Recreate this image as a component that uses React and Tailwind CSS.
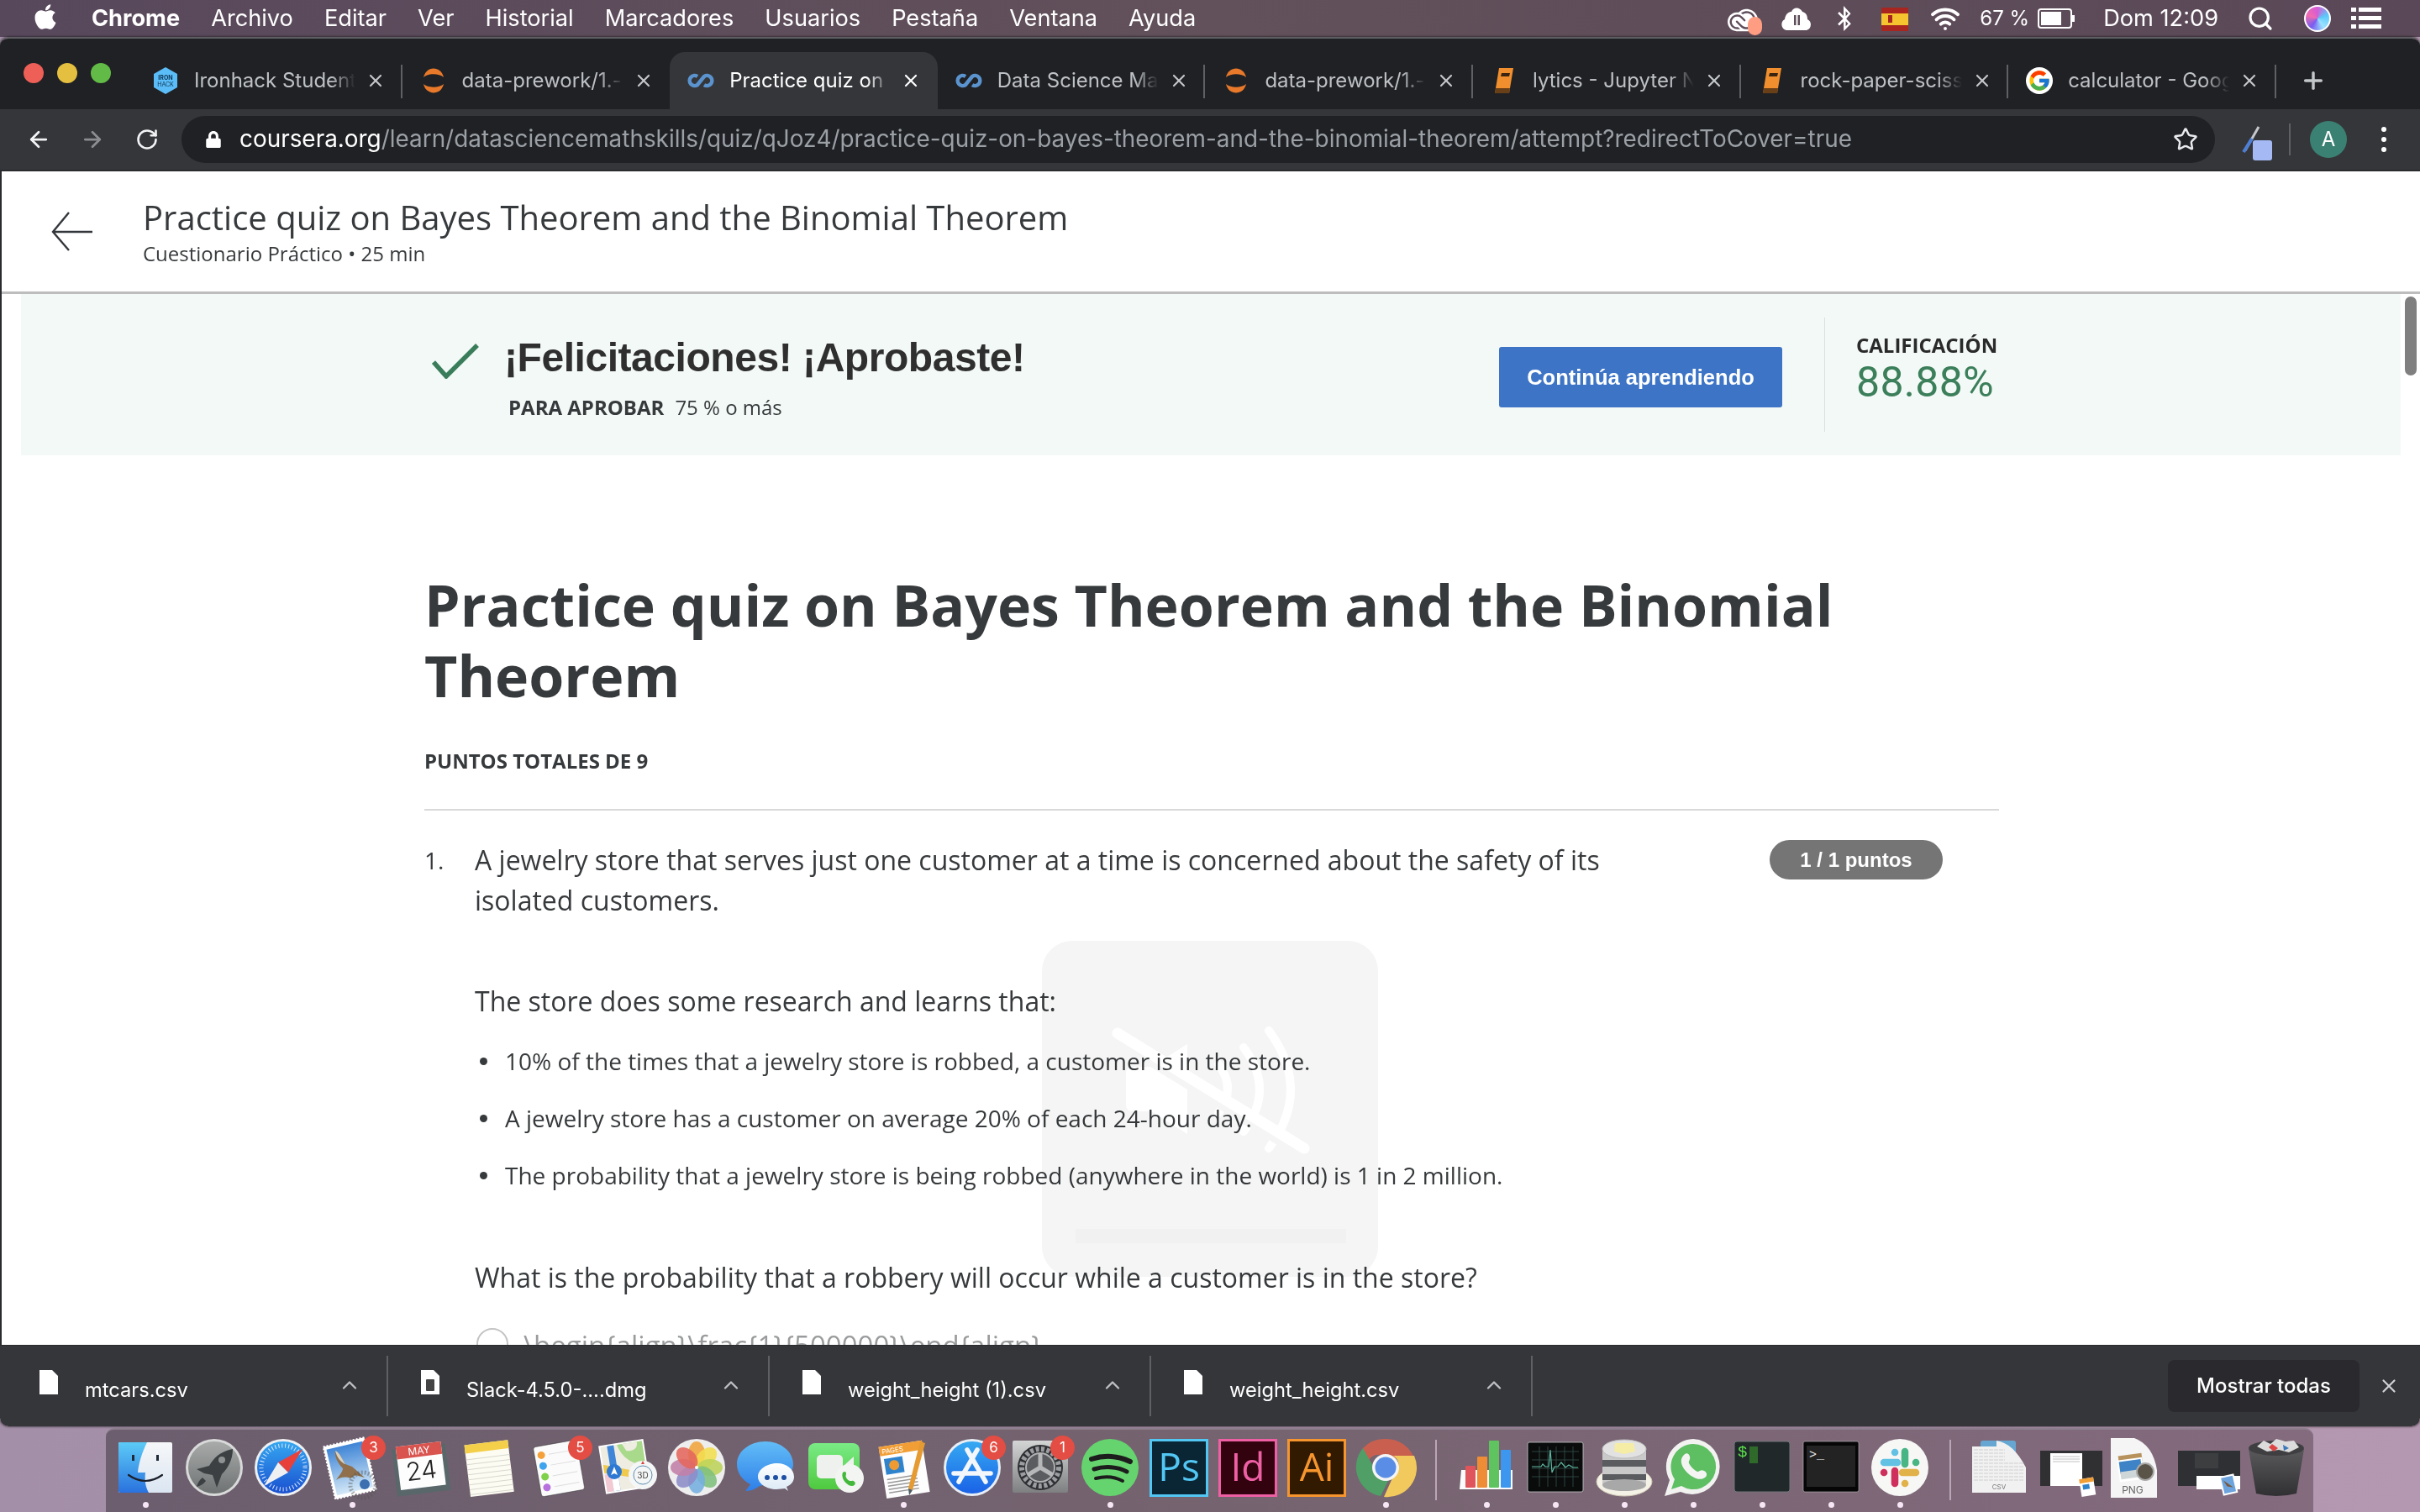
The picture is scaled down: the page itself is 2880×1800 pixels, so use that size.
import { ArrowLeft, ArrowRight, ChevronUp, Plus, RotateCw, Search, Star, Wifi, X } from "lucide-react";
import { FaApple, FaBluetoothB, FaLock } from "react-icons/fa";
import { FcGoogle } from "react-icons/fc";
import { SiAdobecreativecloud } from "react-icons/si";

const Svg = ({ children }) => (
  <svg viewBox="0 0 70 70" width="70" height="70" className="overflow-visible">
    {children}
  </svg>
);

const Grad = ({ id, from, to, x2 = 0, y2 = 1 }) => (
  <linearGradient id={id} x1="0" y1="0" x2={x2} y2={y2}>
    <stop offset="0" stopColor={from} />
    <stop offset="1" stopColor={to} />
  </linearGradient>
);

const Finder = () => (
  <Svg>
    <defs>
      <Grad id="fb" from="#5ccbf7" to="#2a72de" />
      <Grad id="fw" from="#f6f7f9" to="#dbe6f2" />
    </defs>
    <rect x="3" y="5" width="64" height="60" rx="2" fill="url(#fw)" />
    <path d="M5 5H37C31 17 27 30 26 41H35C34 50 35 58 39 65H5Q3 65 3 63V7Q3 5 5 5Z" fill="url(#fb)" />
    <rect x="19" y="20" width="3" height="7" fill="#1d2a3a" />
    <rect x="48" y="20" width="3" height="7" fill="#1d2a3a" />
    <path d="M15 44Q35 58 55 44" fill="none" stroke="#1b1f2a" strokeWidth="2.2" strokeLinecap="round" />
  </Svg>
);

const Launchpad = () => (
  <Svg>
    <defs>
      <Grad id="lp" from="#a9abab" to="#6f7272" />
    </defs>
    <circle cx="35" cy="35" r="34" fill="#d8d9d9" />
    <circle cx="35" cy="35" r="31" fill="url(#lp)" />
    <path d="M57 13C45 15 35 22 29 33L14 37 23 42 33 44 38 59 44 43C52 35 57 25 57 13Z" fill="#3c4042" />
    <path d="M21 47C17 50 15 54 14 58 18 57 22 55 25 51Z" fill="#3c4042" />
    <circle cx="44" cy="26" r="4" fill="#8f9292" />
  </Svg>
);

const Safari = () => (
  <Svg>
    <defs>
      <Grad id="sf" from="#35a7f0" to="#1a50d0" />
    </defs>
    <circle cx="35" cy="35" r="34" fill="#eef0f2" />
    <circle cx="35" cy="35" r="31" fill="url(#sf)" />
    <circle cx="35" cy="35" r="26" fill="none" stroke="#dbe9fb" strokeWidth="5" strokeDasharray="1 3" />
    <polygon points="58,13 41,41 29,29" fill="#e8413c" />
    <polygon points="12,57 41,41 29,29" fill="#eef0f2" />
  </Svg>
);

const Mail = () => (
  <Svg>
    <defs>
      <Grad id="ml" from="#3f85d6" to="#d4e8f7" />
    </defs>
    <g transform="rotate(-13 32 35)">
      <rect x="7" y="4" width="50" height="64" fill="#fff" stroke="#fff" strokeWidth="2" strokeDasharray="2 2" />
      <rect x="10" y="8" width="44" height="56" fill="url(#ml)" />
    </g>
    <path d="M15 15C20 17 23 25 27 31L35 34 50 47 39 44 33 48C27 45 20 47 16 50 20 44 24 40 24 36 18 30 14 22 15 15Z" fill="#8f6f4c" />
    <path d="M15 15C20 17 23 25 27 31 23 30 17 24 15 15Z" fill="#d8d2c4" />
    <circle cx="48" cy="56" r="15" fill="none" stroke="#555" strokeOpacity=".45" strokeWidth="5" strokeDasharray="2 2" />
    <circle cx="50" cy="55" r="6" fill="#3b6fb0" />
  </Svg>
);

const Calendar = () => (
  <Svg>
    <g transform="rotate(-7 35 35)">
      <rect x="3" y="10" width="64" height="56" fill="#59676b" />
      <rect x="8" y="7" width="54" height="52" fill="#fdfdfd" />
      <rect x="8" y="7" width="54" height="15" fill="#d9544f" />
      <text x="35" y="19" fontSize="12" textAnchor="middle" fill="#fff" fontFamily="Inter, sans-serif">MAY</text>
      <text x="35" y="49" fontSize="30" textAnchor="middle" fill="#222" fontFamily="Inter, sans-serif" fontWeight="300">24</text>
    </g>
  </Svg>
);

const Notes = () => (
  <Svg>
    <g transform="rotate(-7 35 35)">
      <rect x="8" y="5" width="52" height="62" fill="#fdfcf3" />
      <rect x="8" y="5" width="52" height="10" fill="#f4cf4a" />
      {[22, 28, 34, 40, 46, 52, 58, 64].map((y) => (
        <rect key={y} x="8" y={y} width="52" height="1" fill="#d8d8d0" />
      ))}
    </g>
  </Svg>
);

const Reminders = () => (
  <Svg>
    <g transform="rotate(-10 35 35)">
      <rect x="9" y="6" width="52" height="60" rx="3" fill="#fbfbfb" stroke="#333" strokeWidth=".5" />
      {[["#f5a13b", 17], ["#3fa4ee", 30], ["#7fd04a", 43], ["#b671dd", 56]].map(([c, y]) => (
        <g key={c}>
          <circle cx="17" cy={y} r="4.5" fill={c} />
          <rect x="26" y={y} width="30" height="1" fill="#ddd" />
        </g>
      ))}
    </g>
  </Svg>
);

const Maps = () => (
  <Svg>
    <g transform="rotate(-9 30 32)">
      <rect x="4" y="5" width="54" height="58" fill="#fff" />
      <rect x="6" y="7" width="50" height="54" fill="#efece2" />
      <path d="M26 7H56V36C44 34 30 26 26 7Z" fill="#a9d98a" />
      <path d="M32 7H50C50 14 46 18 36 16Z" fill="#efece2" />
      <path d="M6 28 56 46V54L6 38Z" fill="#f0c94f" />
      <rect x="14" y="7" width="8" height="54" fill="#3f86d8" />
      <rect x="6" y="40" width="8" height="21" fill="#f3c9d3" />
      <rect x="14" y="38" width="8" height="23" fill="#fff" />
    </g>
    <circle cx="19" cy="40" r="9" fill="#2d78d2" />
    <path d="M19 34 23 44 19 42 15 44Z" fill="#fff" />
    <circle cx="53" cy="44" r="17" fill="#f5f6f6" />
    <circle cx="53" cy="44" r="11" fill="none" stroke="#5f8fb0" strokeWidth="1" />
    <text x="53" y="48" fontSize="10" textAnchor="middle" fill="#444" fontFamily="Inter, sans-serif">3D</text>
    <path d="M53 27 55 31H51Z" fill="#d9443c" />
  </Svg>
);

const Photos = () => (
  <Svg>
    <circle cx="35" cy="35" r="34" fill="#eeeeee" />
    {["#f0a43c", "#f3de4f", "#bcd35a", "#7ec07c", "#74afe0", "#8d8cc8", "#c27fa7", "#e4675c"].map((c, i) => (
      <ellipse key={c} cx="35" cy="19" rx="10" ry="15" fill={c} fillOpacity=".88" transform={`rotate(${i * 45} 35 35)`} />
    ))}
    <circle cx="35" cy="35" r="2" fill="#fff" />
  </Svg>
);

const Messages = () => (
  <Svg>
    <defs>
      <Grad id="ms" from="#62bdf7" to="#2f7fe8" />
      <Grad id="mw" from="#fff" to="#dbe9f5" />
    </defs>
    <path d="M35 4C16 4 1 16 1 31 1 41 7 50 17 55 14 60 11 62 12 63 18 63 24 60 28 57L50 52C62 47 68 40 68 31 68 16 53 4 35 4Z" fill="url(#ms)" />
    <path d="M49 30C37 30 26 37 26 46 26 54 36 61 48 61 52 61 55 60 58 60L62 63 60 58C67 55 69 50 69 46 69 37 60 30 49 30Z" fill="url(#mw)" />
    <circle cx="37" cy="47" r="3" fill="#1d4fa3" />
    <circle cx="47" cy="47" r="3" fill="#1d4fa3" />
    <circle cx="57" cy="47" r="3" fill="#1d4fa3" />
  </Svg>
);

const Facetime = () => (
  <Svg>
    <defs>
      <Grad id="ft" from="#7aeb86" to="#4fc93f" />
    </defs>
    <rect x="4" y="6" width="61" height="55" rx="8" fill="url(#ft)" />
    <rect x="14" y="20" width="31" height="28" rx="5" fill="#eff1ee" />
    <path d="M46 33 58 22V46Z" fill="#eff1ee" />
    <circle cx="53" cy="48" r="17" fill="#f3f5f2" />
    <path d="M45 41C47 39 49 40 49 42 49 44 48 45 49 47 50 49 52 51 54 51 56 51 57 50 59 52 61 54 59 57 56 57 50 57 42 48 45 41Z" fill="#43b93c" />
  </Svg>
);

const Pages = () => (
  <Svg>
    <g transform="rotate(-9 32 37)">
      <rect x="10" y="7" width="52" height="62" fill="#fdfdfd" />
      <rect x="10" y="7" width="52" height="11" fill="#f09e35" />
      <text x="13" y="16" fontSize="8" fill="#fff" fontFamily="Inter, sans-serif">PAGES</text>
      <rect x="14" y="22" width="22" height="19" fill="#2f83cc" />
      <circle cx="25" cy="31" r="6" fill="#ef9b31" />
      {[46, 50, 54, 58, 62].map((y) => (
        <rect key={y} x="14" y={y} width="36" height="1.5" fill="#999" />
      ))}
    </g>
    <path d="M55 4 61 6 46 62 41 60Z" fill="#e59a32" />
    <path d="M41 60 46 62 42 68Z" fill="#4c5b63" />
  </Svg>
);

const AppStore = () => (
  <Svg>
    <defs>
      <Grad id="as" from="#35a9f2" to="#1a62e6" />
    </defs>
    <circle cx="35" cy="35" r="34" fill="#e8eef5" />
    <circle cx="35" cy="35" r="31" fill="url(#as)" />
    <g stroke="#f3f6fb" strokeWidth="5.5" strokeLinecap="round">
      <path d="M41 14 19 52" />
      <path d="M29 14 51 52" />
      <path d="M13 42H57" />
    </g>
  </Svg>
);

const SysPrefs = () => (
  <Svg>
    <defs>
      <Grad id="sp" from="#d4d6d6" to="#7d7f80" />
    </defs>
    <rect x="1" y="3" width="66" height="62" rx="2" fill="url(#sp)" />
    <circle cx="34" cy="35" r="27" fill="#2f3033" />
    <circle cx="34" cy="35" r="22" fill="none" stroke="#9b9da0" strokeWidth="6" strokeDasharray="4 2.5" />
    <circle cx="34" cy="35" r="17" fill="#5a5c5f" stroke="#aeb0b2" strokeWidth="2" />
    <g stroke="#b5b7b9" strokeWidth="5">
      <path d="M34 35V18" />
      <path d="M34 35 19 44" />
      <path d="M34 35 49 44" />
    </g>
  </Svg>
);

const Spotify = () => (
  <Svg>
    <circle cx="35" cy="35" r="34" fill="#65d46e" />
    <g fill="none" stroke="#1d1d1d" strokeLinecap="round">
      <path d="M13 25C28 20 45 21 59 28" strokeWidth="6" />
      <path d="M16 37C29 33 44 34 55 40" strokeWidth="5" />
      <path d="M18 48C29 45 41 46 50 51" strokeWidth="4" />
    </g>
  </Svg>
);

const AdobeIcon = ({ bg, border, label }) => (
  <Svg>
    <rect x="1.5" y="2.5" width="67" height="66" fill={bg} stroke={border} strokeWidth="3" />
    <text x="35" y="51" fontSize="46" textAnchor="middle" fill={border} fontFamily="Open Sans, sans-serif">
      {label}
    </text>
  </Svg>
);

const Chrome = () => (
  <Svg>
    <path d="M35 1A35 35 0 0 1 69 24H35A12 12 0 0 0 14 30L8 12A35 35 0 0 1 35 1Z" fill="#c9604f" />
    <path d="M8 12 25 42A12 12 0 0 0 40 47L29 69A35 35 0 0 1 8 12Z" fill="#4f9f66" />
    <path d="M69 21A35 35 0 0 1 33 70L46 41A12 12 0 0 0 44 21Z" fill="#f2c95c" />
    <circle cx="35" cy="35" r="16" fill="#f5f5f5" />
    <circle cx="35" cy="35" r="12.5" fill="#5a8ee6" />
  </Svg>
);

const Numbers = () => (
  <Svg>
    <path d="M5 38H66V61H3Z" fill="#fbfbfb" />
    <rect x="10" y="33" width="12" height="26" rx="1" fill="#e0555c" />
    <rect x="24" y="22" width="12" height="37" rx="1" fill="#ee8d35" />
    <rect x="38" y="3" width="12" height="56" rx="1" fill="#5fc45f" />
    <rect x="52" y="14" width="12" height="45" rx="1" fill="#3d97ee" />
  </Svg>
);

const Activity = () => (
  <Svg>
    <rect x="2" y="5" width="66" height="59" rx="2" fill="#0a0c0c" stroke="#c7cacb" strokeWidth=".8" />
    <g stroke="#33524c" strokeWidth=".8">
      {[16, 26, 36, 46, 56].map((x) => (
        <path key={x} d={`M${x} 10V58`} />
      ))}
      {[16, 26, 36, 46].map((y) => (
        <path key={y} d={`M7 ${y}H63`} />
      ))}
    </g>
    <path d="M7 34H18L20 31 23 34H27L29 14 31 41 34 34H38L42 29 47 35 51 32 56 35H62" fill="none" stroke="#5fb9a2" strokeWidth="1.2" />
  </Svg>
);

const Sequel = () => (
  <Svg>
    <ellipse cx="35" cy="52" rx="33" ry="17" fill="#f4f1e6" stroke="#cfc9b5" />
    <rect x="9" y="12" width="52" height="44" fill="#c9c9c9" />
    <rect x="9" y="26" width="52" height="8" fill="#5a5c60" />
    <rect x="9" y="43" width="52" height="7" fill="#5a5c60" />
    <ellipse cx="35" cy="56" rx="26" ry="7" fill="#a8a8a8" />
    <ellipse cx="35" cy="13" rx="26" ry="11" fill="#e2e2e2" stroke="#bbb" />
    <path d="M24 6H46L48 16 35 19 23 16Z" fill="#f5eca6" />
  </Svg>
);

const Whatsapp = () => (
  <Svg>
    <path d="M35 1A33 33 0 1 1 20 64L1 69 7 50A33 33 0 0 1 35 1Z" fill="#f2f2f0" />
    <path d="M35 7A27 27 0 1 1 21 57L9 61 13 49A27 27 0 0 1 35 7Z" fill="#5dbe62" />
    <path d="M24 20C27 17 30 18 31 22 32 26 29 27 30 30 32 34 36 38 40 40 43 40 44 37 48 39 52 41 52 45 49 47 42 52 32 46 26 39 20 32 19 25 24 20Z" fill="#f4f4f2" />
  </Svg>
);

const Iterm = () => (
  <Svg>
    <rect x="2" y="4" width="66" height="60" rx="3" fill="#20282a" stroke="#70777a" />
    <text x="6" y="22" fontSize="19" fill="#5ce04c" fontFamily="Liberation Mono, monospace">$</text>
    <rect x="20" y="10" width="10" height="20" fill="#2f6a2b" />
  </Svg>
);

const Terminal = () => (
  <Svg>
    <rect x="2" y="4" width="66" height="60" rx="2" fill="#060606" stroke="#bcbcbc" strokeWidth=".6" />
    <rect x="6" y="9" width="58" height="49" fill="#232323" />
    <text x="9" y="24" fontSize="15" fill="#f0f0f0" fontFamily="Liberation Mono, monospace">&gt;_</text>
  </Svg>
);

const Slack = () => (
  <Svg>
    <circle cx="35" cy="35" r="34" fill="#f7f7f5" />
    <g strokeLinecap="round" strokeWidth="8.5" fill="none">
      <path d="M16 29H32" stroke="#63c1e4" />
      <path d="M29 17H29.1" stroke="#63c1e4" />
      <path d="M41 16V31" stroke="#48b585" />
      <path d="M54 29H54.1" stroke="#48b585" />
      <path d="M38 41H54" stroke="#e2b24a" />
      <path d="M41 54H41.1" stroke="#e2b24a" />
      <path d="M29 39V54" stroke="#ce2f5c" />
      <path d="M16 41H16.1" stroke="#ce2f5c" />
    </g>
  </Svg>
);

const CsvFile = () => (
  <Svg>
    <path d="M11 6Q11 3 14 3H50Q53 3 53 6V30H11Z" fill="#65a7d2" />
    <path d="M1 10H30V3Q50 6 65 35V65H1Z" fill="#f1f1f1" />
    <g stroke="#cfcfcf" strokeWidth="1" strokeDasharray="5 1">
      {[14, 18, 22, 26, 30, 34, 38, 42, 46, 50].map((y) => (
        <path key={y} d={`M3 ${y}H${y < 30 ? 40 : 63}`} />
      ))}
    </g>
    <text x="33" y="61" fontSize="8" textAnchor="middle" fill="#777" fontFamily="Inter, sans-serif">CSV</text>
  </Svg>
);

const ShotPages = () => (
  <Svg>
    <rect x="0" y="15" width="74" height="42" fill="#303033" />
    <rect x="12" y="18" width="38" height="39" fill="#fff" />
    <g stroke="#999" strokeWidth=".6">
      <path d="M15 22H47" />
      <path d="M15 25H47" />
      <path d="M15 28H47" />
    </g>
    <g transform="rotate(-9 55 60)">
      <rect x="48" y="48" width="17" height="21" fill="#fff" />
      <rect x="48" y="48" width="17" height="5" fill="#f09e35" />
      <rect x="51" y="55" width="8" height="6" fill="#2f83cc" />
    </g>
  </Svg>
);

const PngFile = () => (
  <Svg>
    <path d="M2 0H30Q52 8 57 38V71H2Z" fill="#f5f5f5" />
    <g transform="rotate(-8 30 30)">
      <rect x="12" y="19" width="28" height="26" fill="#b7925c" />
      <rect x="10" y="24" width="30" height="26" fill="#fff" />
      <rect x="12" y="26" width="26" height="14" fill="#3f83c7" />
      <rect x="12" y="38" width="26" height="9" fill="#cfd6d8" />
    </g>
    <circle cx="43" cy="40" r="10" fill="#5a5347" stroke="#aaa" strokeWidth="2" />
    <text x="28" y="66" fontSize="12" textAnchor="middle" fill="#666" fontFamily="Inter, sans-serif">PNG</text>
  </Svg>
);

const ShotMail = () => (
  <Svg>
    <rect x="0" y="15" width="74" height="42" fill="#2f3033" />
    <rect x="20" y="18" width="28" height="18" fill="#3d3e40" />
    <rect x="22" y="45" width="52" height="16" fill="#fff" />
    <g transform="rotate(-13 60 55)">
      <rect x="51" y="44" width="18" height="23" fill="#fff" />
      <rect x="53" y="46" width="14" height="19" fill="#6ea4dd" />
      <path d="M55 49 65 60 58 57Z" fill="#7a5a3c" />
    </g>
  </Svg>
);

const Trash = () => (
  <Svg>
    <defs>
      <Grad id="tr" from="#5a5a5c" to="#303033" />
    </defs>
    <path d="M2 13H68L59 66Q35 72 11 66Z" fill="url(#tr)" />
    <ellipse cx="35" cy="12" rx="33" ry="9" fill="#3f3f42" />
    <path d="M12 10 20 3 28 7 35 1 46 4 56 3 62 11 50 17 38 14 24 16Z" fill="#dcdcdc" />
    <path d="M30 7 37 12 32 16 26 11Z" fill="#d44" />
    <path d="M43 8 50 12 44 15Z" fill="#3a78b8" />
  </Svg>
);

const dockItems = [
  { icon: Finder, dot: true },
  { icon: Launchpad },
  { icon: Safari },
  { icon: Mail, dot: true, badge: 3 },
  { icon: Calendar },
  { icon: Notes },
  { icon: Reminders, badge: 5 },
  { icon: Maps },
  { icon: Photos },
  { icon: Messages },
  { icon: Facetime },
  { icon: Pages, dot: true },
  { icon: AppStore, badge: 6 },
  { icon: SysPrefs, badge: 1 },
  { icon: Spotify, dot: true },
  { icon: () => <AdobeIcon bg="#0a2533" border="#52c7f4" label="Ps" /> },
  { icon: () => <AdobeIcon bg="#32030f" border="#ee5fa4" label="Id" /> },
  { icon: () => <AdobeIcon bg="#321a00" border="#f6952e" label="Ai" /> },
  { icon: Chrome, dot: true },
  { sep: true },
  { icon: Numbers, dot: true },
  { icon: Activity, dot: true },
  { icon: Sequel, dot: true },
  { icon: Whatsapp, dot: true },
  { icon: Iterm, dot: true },
  { icon: Terminal, dot: true },
  { icon: Slack, dot: true },
  { sep: true },
  { icon: CsvFile },
  { icon: ShotPages },
  { icon: PngFile },
  { icon: ShotMail },
  { icon: Trash },
];

function DockItem({ item }) {
  if (item.sep) {
    return (
      <div className="flex w-[38px] justify-center pt-[2px]">
        <div className="h-[72px] w-[2px] bg-[#b9a6b6]" />
      </div>
    );
  }
  const Icon = item.icon;
  return (
    <div className="flex w-[82px] flex-col items-center">
      <div className="relative h-[70px] w-[70px]">
        <Icon />
        {item.badge ? (
          <span className="absolute right-[-5px] top-[-3px] flex h-[29px] w-[29px] items-center justify-center rounded-full bg-[#e34d43] font-['Inter',sans-serif] text-[17px] text-white">
            {item.badge}
          </span>
        ) : null}
      </div>
      <div className={`mt-[6px] h-[7px] w-[7px] rounded-full ${item.dot ? "bg-[#f7e6f5]" : "bg-transparent"}`} />
    </div>
  );
}

const IronhackIcon = () => (
  <svg viewBox="0 0 28 32" width="28" height="32">
    <polygon points="14,0 28,8 28,24 14,32 0,24 0,8" fill="#5bbdf8" />
    <text x="14" y="15" fontSize="7" textAnchor="middle" fill="#0d3554" fontFamily="Inter, sans-serif" fontWeight="700">IRON</text>
    <text x="14" y="23" fontSize="7" textAnchor="middle" fill="#0d3554" fontFamily="Inter, sans-serif">HACK</text>
  </svg>
);

const JupyterIcon = () => (
  <svg viewBox="0 0 28 32" width="28" height="32">
    <path d="M2 12C5 -2 23 -2 26 12 20 7 8 7 2 12Z" fill="#e8792b" />
    <path d="M2 20C5 34 23 34 26 20 20 25 8 25 2 20Z" fill="#e8792b" />
  </svg>
);

const CourseraIcon = () => (
  <svg viewBox="0 0 32 20" width="32" height="20">
    <path d="M12 5A6 6 0 1 0 12 15L20 5A6 6 0 1 1 20 15" fill="none" stroke="#5a93ce" strokeWidth="4.5" />
  </svg>
);

const BookIcon = () => (
  <svg viewBox="0 0 24 32" width="24" height="32">
    <path d="M6 1H23L18 31H1Z" fill="#f18f2e" />
    <path d="M9 7H19L18 11H8Z" fill="#3b2410" />
    <path d="M2 25H19L18 31H1Z" fill="#3b2410" fillOpacity=".75" />
  </svg>
);

const tabs = [
  { title: "Ironhack Student", icon: IronhackIcon },
  { title: "data-prework/1.-", icon: JupyterIcon },
  { title: "Practice quiz on", icon: CourseraIcon, active: true },
  { title: "Data Science Ma", icon: CourseraIcon },
  { title: "data-prework/1.-", icon: JupyterIcon },
  { title: "lytics - Jupyter N", icon: BookIcon },
  { title: "rock-paper-sciss", icon: BookIcon },
  { title: "calculator - Goog", icon: () => (
      <div className="flex h-[32px] w-[32px] items-center justify-center rounded-full bg-white">
        <FcGoogle size={28} />
      </div>
    ) },
];

function Tab({ tab, hideSep }) {
  const Icon = tab.icon;
  return (
    <div
      className={`relative flex h-[68px] w-[318.6px] shrink-0 items-center ${
        tab.active ? "rounded-t-[18px] bg-[#35363a]" : ""
      }`}
    >
      <div className="flex w-[71px] justify-center pl-[3px]">
        <Icon />
      </div>
      <span
        className={`w-[192px] overflow-hidden whitespace-nowrap text-[24px] [mask-image:linear-gradient(90deg,#000_85%,transparent)] ${
          tab.active ? "text-white" : "text-[#bdc1c6]"
        }`}
      >
        {tab.title}
      </span>
      <X size={24} strokeWidth={2.2} className={`ml-[12px] ${tab.active ? "text-white" : "text-[#c4c7ca]"}`} />
      {!hideSep ? <div className="absolute right-0 top-[15px] h-[40px] w-[2px] bg-[#5f6063]" /> : null}
    </div>
  );
}

function MenuBar() {
  const items = ["Archivo", "Editar", "Ver", "Historial", "Marcadores", "Usuarios", "Pestaña", "Ventana", "Ayuda"];
  return (
    <div className="flex h-[44px] shrink-0 items-center justify-between bg-gradient-to-r from-[#58485c] via-[#62515a] to-[#5a4858] pl-[37px] pr-[46px] text-[27.2px] text-white">
      <div className="flex items-center gap-[37px]">
        <div className="flex items-center gap-[38px]">
          <FaApple size={34} className="mb-[4px]" />
          <span className="font-bold">Chrome</span>
        </div>
        {items.map((item) => (
          <span key={item}>{item}</span>
        ))}
      </div>
      <div className="flex items-center">
        <div className="relative mr-[24px] h-[32px] w-[38px]">
          <SiAdobecreativecloud size={36} />
          <span className="absolute bottom-[-4px] right-[-3px] h-[22px] w-[17px] rounded-full bg-[#ff9d82]" />
        </div>
        <svg viewBox="0 0 40 32" width="40" height="32" className="mr-[22px]">
          <path d="M8 30A7 7 0 0 1 6 17C7 10 11 8 14 8 16 2 24 2 27 8 31 9 33 12 33 17A7 7 0 0 1 32 30Z" fill="#fff" />
          <rect x="17" y="12" width="2.5" height="12" fill="#5e4d5a" />
          <rect x="21.5" y="12" width="2.5" height="12" fill="#5e4d5a" />
        </svg>
        <FaBluetoothB size={30} className="mr-[29px]" />
        <div className="mr-[26px] flex h-[38px] w-[32px] flex-col items-start">
          <div className="mt-[6px] flex h-[28px] w-[32px] items-center bg-[#f6c42f] pl-[8px] [box-shadow:inset_0_7px_0_#a8261f,inset_0_-7px_0_#a8261f]">
            <span className="h-[9px] w-[5px] bg-[#a8261f]" />
          </div>
        </div>
        <Wifi size={36} strokeWidth={2.6} className="mr-[23px]" />
        <span className="mr-[10px] text-[24px]">67 %</span>
        <div className="mr-[34px] flex items-center">
          <div className="flex h-[24px] w-[41px] items-center rounded-[4px] border-2 border-white p-[2px]">
            <div className="h-full w-[24px] bg-white" />
          </div>
          <div className="h-[8px] w-[3px] bg-white" />
        </div>
        <span className="mr-[34px]">Dom 12:09</span>
        <Search size={32} strokeWidth={2.4} className="mr-[36px]" />
        <div className="mr-[24px] h-[32px] w-[32px] rounded-full border-2 border-white bg-[conic-gradient(#d65bd6,#5ac8fa,#9be3ff,#7a5cf0,#f06bb0,#d65bd6)]" />
        <svg viewBox="0 0 36 28" width="36" height="28">
          <g fill="#fff">
            <rect x="0" y="1" width="6" height="5" />
            <rect x="9" y="1" width="27" height="5" />
            <rect x="0" y="11" width="6" height="5" />
            <rect x="9" y="11" width="27" height="5" />
            <rect x="0" y="21" width="6" height="5" />
            <rect x="9" y="21" width="27" height="5" />
          </g>
        </svg>
      </div>
    </div>
  );
}

function Toolbar() {
  return (
    <div className="flex h-[74px] shrink-0 items-center border-b-[2px] border-[#2a2b2e] bg-[#35363a]">
      <div className="flex w-[216px] items-center pl-[31px]">
        <ArrowLeft size={30} strokeWidth={2.2} className="text-[#f1f3f4]" />
        <ArrowRight size={30} strokeWidth={2.2} className="ml-[34px] text-[#8b8d90]" />
        <RotateCw size={28} strokeWidth={2.2} className="ml-[36px] text-[#f1f3f4]" />
      </div>
      <div className="flex h-[56px] w-[2420px] items-center rounded-full bg-[#202124] pl-[28px] pr-[20px]">
        <FaLock size={20} className="text-white" />
        <div className="ml-[21px] flex-1 whitespace-nowrap text-[27.9px]">
          <span className="text-white">coursera.org</span>
          <span className="text-[#9aa0a6]">/learn/datasciencemathskills/quiz/qJoz4/practice-quiz-on-bayes-theorem-and-the-binomial-theorem/attempt?redirectToCover=true</span>
        </div>
        <Star size={30} strokeWidth={2} className="text-[#e8eaed]" />
      </div>
      <div className="relative ml-[26px] h-[50px] w-[44px]">
        <svg viewBox="0 0 44 50" width="44" height="50">
          <path d="M10 38 26 10" stroke="#c5c8cc" strokeWidth="3" />
          <path d="M8 40 18 24" stroke="#4d7fd6" strokeWidth="4" />
          <rect x="19" y="26" width="23" height="24" rx="3" fill="#a5b9f5" />
        </svg>
      </div>
      <div className="ml-[18px] h-[38px] w-[2px] bg-[#5f6063]" />
      <div className="ml-[23px] flex h-[44px] w-[44px] items-center justify-center rounded-full bg-[#3b8173] text-[24px] text-white">A</div>
      <div className="ml-[41px] flex flex-col gap-[6px]">
        <span className="h-[6px] w-[6px] rounded-full bg-white" />
        <span className="h-[6px] w-[6px] rounded-full bg-white" />
        <span className="h-[6px] w-[6px] rounded-full bg-white" />
      </div>
    </div>
  );
}

function MuteHud() {
  return (
    <div className="absolute left-[1238px] top-[916px] h-[400px] w-[400px] rounded-[36px] bg-[#f5f5f5] mix-blend-multiply">
      <svg viewBox="0 0 400 400" width="400" height="400">
        <path d="M100 158Q100 150 108 150H130L173 123V230L130 203H108Q100 203 100 195Z" fill="#fff" />
        <g fill="none" stroke="#fff" strokeWidth="10" strokeLinecap="round">
          <path d="M210 147Q232 176 210 205" />
          <path d="M240 127Q278 177 240 227" />
          <path d="M270 107Q322 177 270 247" />
        </g>
        <path d="M90 120 312 257" stroke="#f5f5f5" strokeWidth="10" />
        <path d="M90 110 312 247" stroke="#fff" strokeWidth="13" strokeLinecap="round" />
      </svg>
      <div className="absolute left-[40px] top-[343px] h-[17px] w-[322px] bg-[#f1f1f1]" />
    </div>
  );
}

function Page() {
  return (
    <div className="relative min-h-0 flex-1 overflow-hidden border-l-2 border-[#2a2b2e] bg-white font-['Open_Sans',sans-serif] text-[#373a3c]">
      <div className="flex h-[146px] items-center border-b-[3px] border-[#bdbdbd] pb-[2px]">
        <svg viewBox="0 0 50 48" width="50" height="48" className="ml-[58px] text-[#33373b]">
          <path d="M50 25H3M22 2 3 25 22 47" fill="none" stroke="currentColor" strokeWidth="2.4" />
        </svg>
        <div className="ml-[60px]">
          <h2 className="text-[40px] leading-[56px] text-[#373a3c]">Practice quiz on Bayes Theorem and the Binomial Theorem</h2>
          <p className="-mt-[2px] text-[24px] leading-[34px] text-[#373a3c]">Cuestionario Práctico • 25 min</p>
        </div>
      </div>

      <div className="mx-[23px] flex h-[192px] items-center bg-[#f3f9f7] pl-[489px]">
        <div className="flex w-[1270px] items-start self-start pt-[44px]">
          <svg viewBox="0 0 56 42" width="56" height="42" className="mt-[15px]">
            <path d="M2 22 17 39 54 2" fill="none" stroke="#3a7d5b" strokeWidth="5.5" />
          </svg>
          <div className="ml-[30px]">
            <h3 className="font-['Liberation_Sans',sans-serif] text-[48px] font-bold leading-[64px] tracking-[-0.45px] text-[#2f2f2f]">¡Felicitaciones! ¡Aprobaste!</h3>
            <p className="ml-[5px] mt-[10px] text-[24px] leading-[34px]">
              <span className="font-bold">PARA APROBAR</span>
              <span className="ml-[13px]">75 % o más</span>
            </p>
          </div>
        </div>
        <button className="mt-[6px] h-[72px] w-[337px] rounded-[3px] bg-[#3d74c6] font-['Liberation_Sans',sans-serif] text-[25.5px] font-bold text-white">Continúa aprendiendo</button>
        <div className="ml-[50px] h-[136px] w-[1px] bg-[#dcdfde]" />
        <div className="mb-[14px] ml-[37px]">
          <div className="text-[24px] font-bold leading-[32px] text-[#2a2a2a]">CALIFICACIÓN</div>
          <div className="font-['Roboto',sans-serif] text-[50px] font-normal leading-[56px] tracking-[0.3px] text-[#3c7f5b]">88.88%</div>
        </div>
      </div>

      <div className="ml-[503px] w-[1874px]">
        <h1 className="mt-[136px] text-[68px] font-bold leading-[84px] text-[#373a3c]">Practice quiz on Bayes Theorem and the Binomial Theorem</h1>
        <p className="mt-[44px] text-[24px] font-bold leading-[32px]">PUNTOS TOTALES DE 9</p>
        <div className="mt-[41px] h-[2px] bg-[#d9d9d9]" />
        <div className="mt-[35px] flex items-start">
          <span className="w-[60px] text-[28px] leading-[48px]">1.</span>
          <div className="w-[1541px] pr-[140px] text-[32px] leading-[48px]">
            A jewelry store that serves just one customer at a time is concerned about the safety of its isolated customers.
          </div>
          <span className="flex h-[47px] w-[206px] items-center justify-center rounded-full bg-[#757575] font-['Liberation_Sans',sans-serif] text-[24px] font-bold text-white">1 / 1 puntos</span>
        </div>
        <div className="ml-[60px]">
          <p className="mt-[72px] text-[32px] leading-[48px]">The store does some research and learns that:</p>
          <ul className="mt-[27px] flex flex-col gap-[28px] text-[28px] leading-[40px]">
            {[
              "10% of the times that a jewelry store is robbed, a customer is in the store.",
              "A jewelry store has a customer on average 20% of each 24-hour day.",
              "The probability that a jewelry store is being robbed (anywhere in the world) is 1 in 2 million.",
            ].map((line) => (
              <li key={line} className="flex items-center">
                <span className="ml-[6px] mr-[21px] h-[9px] w-[9px] rounded-full bg-[#373a3c]" />
                {line}
              </li>
            ))}
          </ul>
          <p className="mt-[78px] text-[32px] leading-[48px]">What is the probability that a robbery will occur while a customer is in the store?</p>
          <div className="mt-[36px] flex items-start opacity-50">
            <span className="ml-[2px] h-[38px] w-[38px] shrink-0 rounded-full border-2 border-[#8a8a8a]" />
            <span className="ml-[18px] mt-[1px] text-[33px] leading-[40px]">\begin{"{align}"}\frac{"{1}"}{"{500000}"}\end{"{align}"}</span>
          </div>
        </div>
      </div>

      <MuteHud />
      <div className="absolute right-[4px] top-[149px] h-[94px] w-[14px] rounded-full bg-[#7f7f7f]" />
    </div>
  );
}

function DownloadFile({ name, dmg }) {
  return (
    <div className="flex h-[72px] w-[454px] shrink-0 items-center border-r-2 border-[#5f6063] pl-[39px]">
      <svg viewBox="0 0 22 29" width="22" height="29" className="mb-[10px]">
        <path d="M0 0H15L22 7V29H0Z" fill="#fff" />
        {dmg ? <rect x="6" y="11" width="10" height="14" rx="1" fill="#444" /> : null}
      </svg>
      <span className="ml-[32px] mt-[10px] w-[301px] whitespace-nowrap text-[23.7px] text-white">{name}</span>
      <ChevronUp size={28} strokeWidth={2} className="mb-[2px] text-[#bdc1c6]" />
    </div>
  );
}

function Downloads() {
  return (
    <div className="flex h-[97px] shrink-0 items-center justify-between rounded-b-[10px] border-t-[1px] border-[#2a2b2e] bg-[#35363a] pl-[8px] pr-[24px]">
      <div className="flex">
        <DownloadFile name="mtcars.csv" />
        <DownloadFile name="Slack-4.5.0-....dmg" dmg />
        <DownloadFile name="weight_height (1).csv" />
        <DownloadFile name="weight_height.csv" />
      </div>
      <div className="flex items-center">
        <span className="flex h-[62px] w-[228px] items-center justify-center rounded-[8px] bg-[#2a2a2e] text-[24px] font-medium text-white">Mostrar todas</span>
        <X size={26} strokeWidth={2} className="ml-[22px] text-[#d0d3d6]" />
      </div>
    </div>
  );
}

export default function App() {
  return (
    <div className="flex h-[1800px] w-[2880px] flex-col overflow-hidden bg-gradient-to-r from-[#a48fa8] to-[#b497b0] font-['Inter',sans-serif]">
      <MenuBar />
      <div className="flex h-[1654px] shrink-0 flex-col overflow-hidden rounded-[10px] border-t-2 border-[#5e5e62] shadow-[0_0_3px_#111]">
        <div className="flex h-[84px] shrink-0 items-end bg-[#202124]">
          <div className="flex w-[160px] shrink-0 self-center pb-[2px] pl-[28px]">
            <span className="h-[24px] w-[24px] rounded-full bg-[#ee5f57]" />
            <span className="ml-[16px] h-[24px] w-[24px] rounded-full bg-[#e5bf3f]" />
            <span className="ml-[16px] h-[24px] w-[24px] rounded-full bg-[#62bb46]" />
          </div>
          {tabs.map((tab, i) => (
            <Tab key={i} tab={tab} hideSep={i === 1 || i === 2} />
          ))}
          <Plus size={32} strokeWidth={2.6} className="mb-[18px] ml-[28px] text-[#c4c7ca]" />
        </div>
        <Toolbar />
        <Page />
        <Downloads />
      </div>
      <div className="ml-[126px] mt-[2px] flex h-[100px] w-[2627px] shrink-0 rounded-t-[10px] border-t-2 border-[#8e7f8e] bg-gradient-to-r from-[#6c5e6e] via-[#75636f] to-[#846b7e] pl-[6px] pt-[10px]">
        {dockItems.map((item, i) => (
          <DockItem key={i} item={item} />
        ))}
      </div>
    </div>
  );
}
